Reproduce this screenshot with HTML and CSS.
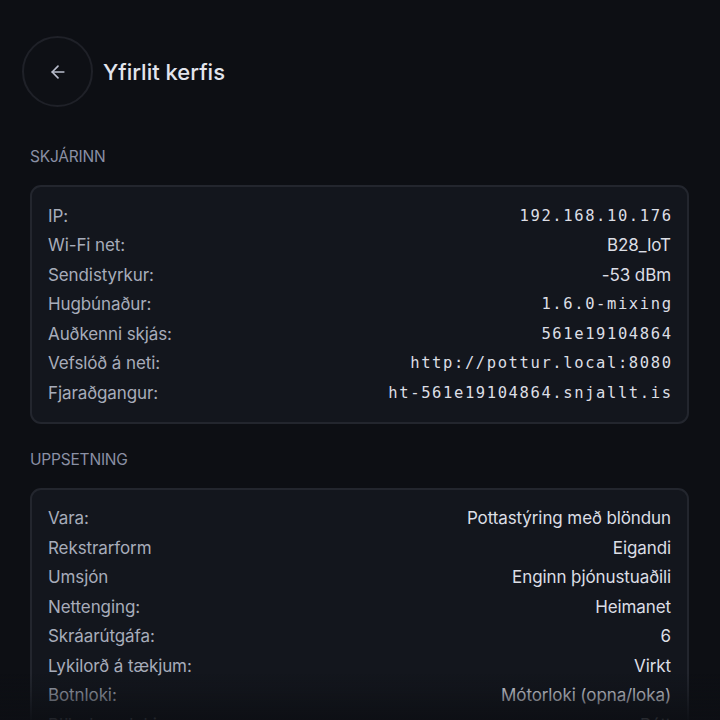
FILE: index.html
```html
<!DOCTYPE html>
<html lang="is">
<head>
<meta charset="utf-8">
<title>Yfirlit kerfis</title>
<link rel="stylesheet" href="styles.css">
</head>
<body>
<div class="page">
  <header class="header">
    <button class="back" aria-label="Til baka">
      <svg width="20" height="20" viewBox="0 0 24 24" fill="none" stroke="currentColor" stroke-width="2" stroke-linecap="round" stroke-linejoin="round"><path d="M19 12H5"/><path d="M12 19l-7-7 7-7"/></svg>
    </button>
    <h1 class="title">Yfirlit kerfis</h1>
  </header>

  <section class="section">
    <h2 class="section-label">SKJÁRINN</h2>
    <div class="card">
      <div class="row"><span class="label">IP:</span><span class="value mono">192.168.10.176</span></div>
      <div class="row"><span class="label">Wi-Fi net:</span><span class="value">B28_IoT</span></div>
      <div class="row"><span class="label">Sendistyrkur:</span><span class="value">-53 dBm</span></div>
      <div class="row"><span class="label">Hugbúnaður:</span><span class="value mono">1.6.0-mixing</span></div>
      <div class="row"><span class="label">Auðkenni skjás:</span><span class="value mono">561e19104864</span></div>
      <div class="row"><span class="label">Vefslóð á neti:</span><span class="value mono">http://pottur.local:8080</span></div>
      <div class="row"><span class="label">Fjaraðgangur:</span><span class="value mono">ht-561e19104864.snjallt.is</span></div>
    </div>
  </section>

  <section class="section">
    <h2 class="section-label">UPPSETNING</h2>
    <div class="card">
      <div class="row"><span class="label">Vara:</span><span class="value">Pottastýring með blöndun</span></div>
      <div class="row"><span class="label">Rekstrarform</span><span class="value">Eigandi</span></div>
      <div class="row"><span class="label">Umsjón</span><span class="value">Enginn þjónustuaðili</span></div>
      <div class="row"><span class="label">Nettenging:</span><span class="value">Heimanet</span></div>
      <div class="row"><span class="label">Skráarútgáfa:</span><span class="value">6</span></div>
      <div class="row"><span class="label">Lykilorð á tækjum:</span><span class="value">Virkt</span></div>
      <div class="row"><span class="label">Botnloki:</span><span class="value">Mótorloki (opna/loka)</span></div>
      <div class="row"><span class="label">Blöndunarloki:</span><span class="value">Rétt</span></div>
    </div>
  </section>
</div>
<div class="fade"></div>
</body>
</html>
```

FILE: styles.css
```css
html, body {
  margin: 0;
  padding: 0;
  background: #0d0f14;
  height: 100%;
  overflow: hidden;
}
body {
  font-family: Inter, "Noto Sans", sans-serif;
  color: #dfe1e8;
}
.page {
  padding: 36px 31px 0 30px;
}
.header {
  display: flex;
  align-items: center;
  gap: 10px;
  margin-left: -8px;
}
.back {
  width: 71px;
  height: 71px;
  border-radius: 50%;
  border: 2px solid #1f2128;
  background: #0e1015;
  color: #b9bdcc;
  display: flex;
  align-items: center;
  justify-content: center;
  padding: 0;
  flex: none;
}
.title {
  margin: 0;
  font-size: 22px;
  font-weight: 500;
  color: #e2e4ec;
  letter-spacing: 0;
}
.section {
  margin-top: 40px;
}
.section + .section {
  margin-top: 26px;
}
.section-label {
  margin: 0 0 18px 0;
  font-size: 15.5px;
  font-weight: 400;
  color: #8a90a4;
  letter-spacing: -0.2px;
  line-height: 20px;
}
.card {
  background: #13161d;
  border: 2px solid #23262e;
  border-radius: 11px;
  padding: 14px 16px 14px 16px;
}
.row {
  display: flex;
  justify-content: space-between;
  align-items: center;
  height: 29.5px;
  font-size: 17px;
  letter-spacing: -0.1px;
}
.label {
  color: #a7acba;
}
.value {
  color: #dcdee5;
  text-align: right;
}
.mono {
  font-family: "DejaVu Sans Mono", "Liberation Mono", monospace;
  font-size: 15.5px;
  letter-spacing: 1.6px;
  margin-right: -1.6px;
}
.fade {
  position: fixed;
  left: 0;
  right: 0;
  bottom: 0;
  height: 46px;
  background: linear-gradient(to bottom, rgba(13,15,20,0) 0%, rgba(13,15,20,0.3) 40%, rgba(13,15,20,0.9) 100%);
  pointer-events: none;
}
```
